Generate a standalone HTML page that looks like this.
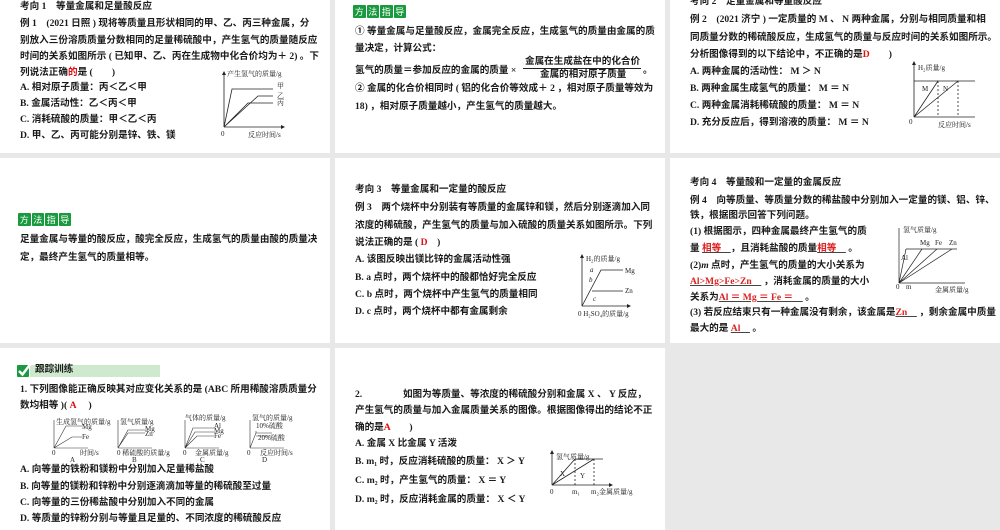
<!DOCTYPE html>
<html><head><meta charset="utf-8"><style>
*{margin:0;padding:0;box-sizing:border-box}
body{width:1000px;height:530px;background:#e8e8e8;position:relative;overflow:hidden;font-family:"Liberation Serif","Noto Sans CJK SC",serif;color:#1a1a1a}
.p{position:absolute;background:#fff;overflow:hidden}
.l{position:absolute;white-space:nowrap;font-size:9.6px;font-weight:bold;line-height:12px}
.r{color:#d11;font-family:"Liberation Serif",serif;font-weight:bold}
.u{color:#d22;text-decoration:underline;text-decoration-color:#444}
.badge{position:absolute;display:flex;gap:1px}
.badge span{background:#1a9a3e;color:#fff;font-size:9px;width:12.5px;height:13px;line-height:13px;text-align:center;font-family:"Noto Sans CJK SC",sans-serif;border-radius:1px}
svg{position:absolute;overflow:visible}
svg text{font-family:"Liberation Serif","Noto Serif CJK SC",serif;font-size:7px;fill:#222}
</style></head><body>

<!-- Panel 1 -->
<div class="p" style="left:0;top:0;width:330px;height:153px">
<div class="l" style="left:20px;top:1px">考向 1　等量金属和足量酸反应</div>
<div class="l" style="left:20px;top:18px">例 1　(2021 日照 ) 现将等质量且形状相同的甲、乙、丙三种金属，分</div>
<div class="l" style="left:20px;top:35px">别放入三份溶质质量分数相同的足量稀硫酸中，产生氢气的质量随反应</div>
<div class="l" style="left:20px;top:51px">时间的关系如图所示 ( 已知甲、乙、丙在生成物中化合价均为＋ 2) 。下</div>
<div class="l" style="left:20px;top:67px">列说法正确<span style="color:#d11">的</span>是 (　　)</div>
<div class="l" style="left:20px;top:82px">A. 相对原子质量：丙＜乙＜甲</div>
<div class="l" style="left:20px;top:98px">B. 金属活动性：乙＜丙＜甲</div>
<div class="l" style="left:20px;top:114px">C. 消耗硫酸的质量：甲＜乙＜丙</div>
<div class="l" style="left:20px;top:130px">D. 甲、乙、丙可能分别是锌、铁、镁</div>
<svg style="left:0;top:0" width="330" height="153">
<g stroke="#222" stroke-width="0.8" fill="none">
<path d="M224,127V73M224,127H283"/>
<path d="M224,127L232,89H273M224,127L248,103H273M224,127L258,96H273"/>
</g>
<path d="M222,75l2,-4l2,4zM281,125l4,2l-4,2z" fill="#222"/>
<text x="227" y="76">产生氢气的质量/g</text>
<text x="277" y="88">甲</text><text x="277" y="98">乙</text><text x="277" y="105">丙</text>
<text x="221" y="136">0</text><text x="248" y="137">反应时间/s</text>
</svg>
</div>

<!-- Panel 2 -->
<div class="p" style="left:335px;top:0;width:330px;height:153px">
<div class="badge" style="left:18px;top:5px"><span>方</span><span>法</span><span>指</span><span>导</span></div>
<div class="l" style="left:20px;top:26px">① 等量金属与足量酸反应，金属完全反应，生成氢气的质量由金属的质</div>
<div class="l" style="left:20px;top:43px">量决定，计算公式：</div>
<div class="l" style="left:20px;top:65px">氢气的质量＝参加反应的金属的质量 ×</div>
<div class="l" style="left:190px;top:56px">金属在生成盐在中的化合价</div>
<div style="position:absolute;left:188px;top:68px;width:118px;border-top:1px solid #222"></div>
<div class="l" style="left:205px;top:69px">金属的相对原子质量</div>
<div class="l" style="left:308px;top:65px">。</div>
<div class="l" style="left:20px;top:83px">② 金属的化合价相同时 ( 铝的化合价等效成＋ 2 ，相对原子质量等效为</div>
<div class="l" style="left:20px;top:101px">18) ，相对原子质量越小，产生氢气的质量越大。</div>
</div>

<!-- Panel 3 -->
<div class="p" style="left:670px;top:0;width:330px;height:153px">
<div class="l" style="left:20px;top:-4px">考向 2　足量金属和等量酸反应</div>
<div class="l" style="left:20px;top:14px">例 2　(2021 济宁 ) 一定质量的 M 、 N 两种金属，分别与相同质量和相</div>
<div class="l" style="left:20px;top:32px">同质量分数的稀硫酸反应，生成氢气的质量与反应时间的关系如图所示。</div>
<div class="l" style="left:20px;top:49px">分析图像得到的以下结论中，不正确的是<span style="color:#d11">D</span>　　)</div>
<div class="l" style="left:20px;top:66px">A. 两种金属的活动性： M ＞ N</div>
<div class="l" style="left:20px;top:83px">B. 两种金属生成氢气的质量： M ＝ N</div>
<div class="l" style="left:20px;top:100px">C. 两种金属消耗稀硫酸的质量： M ＝ N</div>
<div class="l" style="left:20px;top:117px">D. 充分反应后，得到溶液的质量： M ＝ N</div>
<svg style="left:0;top:0" width="330" height="153">
<g stroke="#222" stroke-width="0.8" fill="none">
<path d="M244,117V63M244,117H305"/>
<path d="M244,81H305" />
<path d="M244,117L268,81M244,117L288,81"/>
<path d="M268,81V117M288,81V117" stroke-dasharray="2,2"/>
</g>
<path d="M242,65l2,-4l2,4z" fill="#222"/>
<text x="248" y="70">H₂质量/g</text>
<text x="252" y="91">M</text><text x="273" y="91">N</text>
<text x="239" y="124">0</text><text x="268" y="127">反应时间/s</text>
</svg>
</div>

<!-- Row 2 Panel 1 -->
<div class="p" style="left:0;top:158px;width:330px;height:185px">
<div class="badge" style="left:18px;top:55px"><span>方</span><span>法</span><span>指</span><span>导</span></div>
<div class="l" style="left:20px;top:76px">足量金属与等量的酸反应，酸完全反应，生成氢气的质量由酸的质量决</div>
<div class="l" style="left:20px;top:94px">定，最终产生氢气的质量相等。</div>
</div>

<!-- Row 2 Panel 2 -->
<div class="p" style="left:335px;top:158px;width:330px;height:185px">
<div class="l" style="left:20px;top:26px">考向 3　等量金属和一定量的酸反应</div>
<div class="l" style="left:20px;top:44px">例 3　两个烧杯中分别装有等质量的金属锌和镁，然后分别逐滴加入同</div>
<div class="l" style="left:20px;top:62px">浓度的稀硫酸，产生氢气的质量与加入硫酸的质量关系如图所示。下列</div>
<div class="l" style="left:20px;top:79px">说法正确的是 ( <span class="r">D</span>　)</div>
<div class="l" style="left:20px;top:96px">A. 该图反映出镁比锌的金属活动性强</div>
<div class="l" style="left:20px;top:114px">B. a 点时，两个烧杯中的酸都恰好完全反应</div>
<div class="l" style="left:20px;top:131px">C. b 点时，两个烧杯中产生氢气的质量相同</div>
<div class="l" style="left:20px;top:148px">D. c 点时，两个烧杯中都有金属剩余</div>
<svg style="left:0;top:0" width="330" height="185">
<g stroke="#222" stroke-width="0.8" fill="none">
<path d="M247,148V98M247,148H294"/>
<path d="M247,148L266,112H288M257,133H288"/>
</g>
<path d="M245,100l2,-4l2,4zM292,146l4,2l-4,2z" fill="#222"/>
<text x="251" y="103" font-size="8">H₂的质量/g</text>
<text x="255" y="114" font-style="italic">a</text><text x="254" y="124" font-style="italic">b</text><text x="258" y="143" font-style="italic">c</text>
<text x="290" y="115" font-size="8">Mg</text><text x="290" y="135" font-size="8">Zn</text>
<text x="243" y="158" font-size="8">0 H₂SO₄的质量/g</text>
</svg>
</div>

<!-- Row 2 Panel 3 -->
<div class="p" style="left:670px;top:158px;width:330px;height:185px">
<div class="l" style="left:20px;top:19px">考向 4　等量酸和一定量的金属反应</div>
<div class="l" style="left:20px;top:37px">例 4　向等质量、等质量分数的稀盐酸中分别加入一定量的镁、铝、锌、</div>
<div class="l" style="left:20px;top:52px">铁，根据图示回答下列问题。</div>
<div class="l" style="left:20px;top:68px">(1) 根据图示，四种金属最终产生氢气的质</div>
<div class="l" style="left:20px;top:85px">量 <span class="u">相等　</span>，且消耗盐酸的质量<span class="u">相等　</span> 。</div>
<div class="l" style="left:20px;top:102px">(2)<i>m</i> 点时，产生氢气的质量的大小关系为</div>
<div class="l" style="left:20px;top:118px"><span class="u">Al&gt;Mg&gt;Fe&gt;Zn　</span> ，消耗金属的质量的大小</div>
<div class="l" style="left:20px;top:134px">关系为<span class="u">Al ＝ Mg ＝ Fe ＝　</span> 。</div>
<div class="l" style="left:20px;top:149px">(3) 若反应结束只有一种金属没有剩余，该金属是<span class="u">Zn　</span> ，剩余金属中质量</div>
<div class="l" style="left:20px;top:165px">最大的是 <span class="u">Al　</span> 。</div>
<svg style="left:0;top:0" width="330" height="185">
<g stroke="#222" stroke-width="0.7" fill="none">
<path d="M229,125V70M229,125H295"/>
<path d="M236,91H287M229,125L236,91M229,125L252,91M229,125L267,91M229,125L282,91"/>
</g>
<text x="233" y="74" font-size="6">氢气质量/g</text>
<text x="231" y="102" font-size="6">Al</text><text x="250" y="87" font-size="6">Mg</text><text x="265" y="87" font-size="6">Fe</text><text x="279" y="87" font-size="6">Zn</text>
<text x="226" y="131" font-size="6">0</text><text x="236" y="131" font-size="6">m</text>
<text x="265" y="134" font-size="6">金属质量/g</text>
</svg>
</div>

<!-- Row 3 Panel 1 -->
<div class="p" style="left:0;top:348px;width:330px;height:182px">
<div style="position:absolute;left:30px;top:17px;width:130px;height:12px;background:#cfe9cf"></div>
<svg style="left:16px;top:13px" width="18" height="18"><rect x="1" y="4" width="12" height="12" fill="#1a9a3e" rx="1"/><path d="M3,10l3.5,3.5l9,-12" stroke="#fff" stroke-width="2.4" fill="none"/></svg>
<div class="l" style="left:35px;top:16px">跟踪训练</div>
<div class="l" style="left:20px;top:36px">1. 下列图像能正确反映其对应变化关系的是 (ABC 所用稀酸溶质质量分</div>
<div class="l" style="left:20px;top:52px">数均相等 )( <span class="r">A</span>　 )</div>
<svg style="left:0;top:0" width="330" height="182">
<g stroke="#333" stroke-width="0.6" fill="none">
<path d="M54,100V72M54,100H88M54,100L66,78H82M54,100L72,89H82"/>
<path d="M118,100V72M118,100H152M118,100L128,82H145M118,100L128,85H145"/>
<path d="M185,100V72M185,100H219M185,100L193,80H214M185,100L195,84H214M185,100L197,88H214"/>
<path d="M250,100V72M250,100H284M250,100L256,85H272M256,85V83M256,88L260,88H272"/>
</g>
<g font-size="4.5">
<text x="56" y="76">生成氢气的质量/g</text><text x="82" y="81">Mg</text><text x="82" y="91">Fe</text><text x="52" y="107">0</text><text x="80" y="107">时间/s</text><text x="70" y="114">A</text>
<text x="120" y="76">氢气质量/g</text><text x="145" y="83">Mg</text><text x="145" y="88">Zn</text><text x="117" y="107">0 稀硫酸的质量/g</text><text x="132" y="114">B</text>
<text x="185" y="72">气体的质量/g</text><text x="214" y="80">Al</text><text x="214" y="85">Mg</text><text x="214" y="90">Fe</text><text x="183" y="107">0</text><text x="195" y="107">金属质量/g</text><text x="200" y="114">C</text>
<text x="252" y="72">氢气的质量/g</text><text x="256" y="80">10%硫酸</text><text x="258" y="92">20%硫酸</text><text x="247" y="107">0</text><text x="260" y="107">反应时间/s</text><text x="262" y="114">D</text>
</g>
</svg>
<div class="l" style="left:20px;top:116px">A. 向等量的铁粉和镁粉中分别加入足量稀盐酸</div>
<div class="l" style="left:20px;top:133px">B. 向等量的镁粉和锌粉中分别逐滴滴加等量的稀硫酸至过量</div>
<div class="l" style="left:20px;top:149px">C. 向等量的三份稀盐酸中分别加入不同的金属</div>
<div class="l" style="left:20px;top:165px">D. 等质量的锌粉分别与等量且足量的、不同浓度的稀硫酸反应</div>
</div>

<!-- Row 3 Panel 2 -->
<div class="p" style="left:335px;top:348px;width:330px;height:182px">
<div class="l" style="left:20px;top:41px">2.　　　　 如图为等质量、等浓度的稀硫酸分别和金属 X 、 Y 反应，</div>
<div class="l" style="left:20px;top:57px">产生氢气的质量与加入金属质量关系的图像。根据图像得出的结论不正</div>
<div class="l" style="left:20px;top:74px">确的是<span style="color:#d11">A</span>　　)</div>
<div class="l" style="left:20px;top:90px">A. 金属 X 比金属 Y 活泼</div>
<div class="l" style="left:20px;top:108px">B. m₁ 时，反应消耗硫酸的质量： X ＞ Y</div>
<div class="l" style="left:20px;top:127px">C. m₂ 时，产生氢气的质量： X ＝ Y</div>
<div class="l" style="left:20px;top:146px">D. m₂ 时，反应消耗金属的质量： X ＜ Y</div>
<svg style="left:0;top:0" width="330" height="182">
<g stroke="#222" stroke-width="0.8" fill="none">
<path d="M217,137V104M217,137H276"/>
<path d="M240,111H268M217,137L240,111M217,137L259,111"/>
<path d="M240,111V137M259,111V137" stroke-dasharray="2,2"/>
</g>
<path d="M215,106l2,-4l2,4zM274,135l4,2l-4,2z" fill="#222"/>
<text x="221" y="111" font-size="7.5">氢气质量/g</text>
<text x="225" y="128">X</text><text x="245" y="130">Y</text>
<text x="215" y="146">0</text><text x="237" y="146" font-size="6">m₁</text><text x="256" y="146" font-size="6">m₂</text>
<text x="264" y="146" font-size="7.5">金属质量/g</text>
</svg>
</div>

</body></html>
